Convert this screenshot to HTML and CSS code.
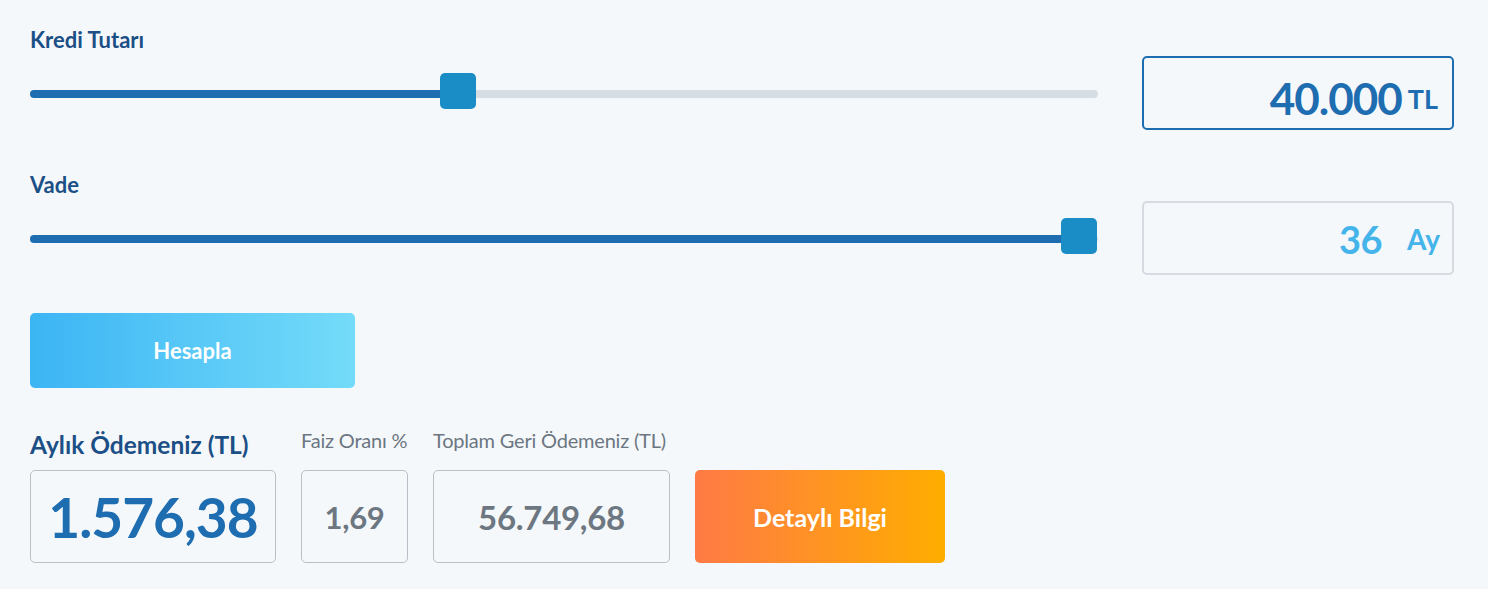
FILE: index.html
```html
<!DOCTYPE html>
<html lang="tr">
<head>
<meta charset="utf-8">
<title>Kredi Hesaplama</title>
<link rel="stylesheet" href="styles.css">
</head>
<body>
<div class="calc">
  <div class="field">
    <div class="field-main">
      <div class="field-label">Kredi Tutarı</div>
      <div class="slider">
        <div class="track"><div class="fill" style="width:430px"></div></div>
        <div class="thumb" style="left:410px"></div>
      </div>
    </div>
    <div class="value-box value-box--active">
      <span class="value-num">40.000</span><span class="value-unit">TL</span>
    </div>
  </div>

  <div class="field field--second">
    <div class="field-main">
      <div class="field-label">Vade</div>
      <div class="slider">
        <div class="track"><div class="fill" style="width:1050px"></div></div>
        <div class="thumb" style="left:1031px"></div>
      </div>
    </div>
    <div class="value-box value-box--muted">
      <span class="value-num value-num--light">36</span><span class="value-unit value-unit--light">Ay</span>
    </div>
  </div>

  <button class="btn-calc" type="button">Hesapla</button>

  <div class="results">
    <div class="result result--main">
      <div class="result-label result-label--main">Aylık Ödemeniz (TL)</div>
      <div class="result-box result-box--main"><span class="result-main-num">1.576,38</span></div>
    </div>
    <div class="result result--rate">
      <div class="result-label">Faiz Oranı %</div>
      <div class="result-box"><span class="result-num result-num--small">1,69</span></div>
    </div>
    <div class="result result--total">
      <div class="result-label">Toplam Geri Ödemeniz (TL)</div>
      <div class="result-box"><span class="result-num">56.749,68</span></div>
    </div>
    <div class="result result--action">
      <div class="result-label"></div>
      <button class="btn-detail" type="button">Detaylı Bilgi</button>
    </div>
  </div>
</div>
</body>
</html>
```

FILE: styles.css
```css
* { box-sizing: border-box; }

html, body {
  margin: 0;
  padding: 0;
  background: #f5f8fb;
}

body {
  font-family: "Lato", "Open Sans", sans-serif;
  color: #1b4f86;
}

.calc {
  padding: 28px 34px 0 30px;
}

.field {
  display: flex;
  align-items: flex-start;
  gap: 44px;
}

.field--second {
  margin-top: 43px;
}

.field-main {
  width: 1068px;
}

.field-label {
  height: 24px;
  line-height: 24px;
  font-size: 22px;
  font-weight: 700;
  color: #1b4f86;
}

.slider {
  position: relative;
  height: 36px;
  margin-top: 21px;
}

.track {
  position: absolute;
  left: 0;
  right: 0;
  top: 17px;
  height: 8px;
  border-radius: 4px;
  background: #d6dee4;
  overflow: hidden;
}

.fill {
  height: 100%;
  background: #1e6db0;
}

.thumb {
  position: absolute;
  top: 0;
  width: 36px;
  height: 36px;
  border-radius: 5px;
  background: #1a8cc6;
}

.value-box {
  margin-top: 28px;
  width: 312px;
  height: 74px;
  border-radius: 5px;
  display: flex;
  align-items: center;
  justify-content: flex-end;
  padding: 10px 14px 0 0;
}

.value-box--active {
  border: 2px solid #1e6db0;
}

.value-box--muted {
  border: 2px solid #d5dbe0;
  padding: 2px 12px 0 0;
}

.value-num {
  font-size: 44px;
  font-weight: 700;
  color: #1e6db0;
  letter-spacing: -1px;
}

.value-unit {
  font-size: 27px;
  font-weight: 700;
  color: #1e6db0;
  margin-left: 6px;
}

.value-num--light {
  font-size: 38px;
  color: #45b4ea;
  letter-spacing: -0.5px;
}

.value-unit--light {
  font-size: 28px;
  color: #45b4ea;
  margin-left: 25px;
}

.btn-calc {
  display: block;
  margin-top: 38px;
  width: 325px;
  height: 75px;
  border: 0;
  border-radius: 5px;
  background: linear-gradient(90deg, #3cb5f4 0%, #74dbf9 100%);
  color: #ffffff;
  font-family: inherit;
  font-size: 22px;
  font-weight: 700;
  padding: 0;
}

.results {
  display: flex;
  gap: 25px;
  margin-top: 40px;
}

.result {
  display: flex;
  flex-direction: column;
}

.result-label {
  height: 42px;
  font-size: 20px;
  line-height: 24px;
  color: #6b7681;
  white-space: nowrap;
  letter-spacing: -0.2px;
}

.result-label--main {
  font-size: 24.5px;
  font-weight: 700;
  color: #1b4f86;
  line-height: 34px;
  letter-spacing: 0;
}

.result-box {
  height: 93px;
  border: 1px solid #b8bfc6;
  border-radius: 5px;
  display: flex;
  align-items: center;
  justify-content: center;
}

.result--main { width: 246px; }
.result--rate { width: 107px; }
.result--total { width: 237px; }
.result--action { width: 250px; }

.result-main-num {
  font-size: 55px;
  font-weight: 700;
  color: #1e6db0;
  letter-spacing: -1px;
}

.result-num {
  font-size: 33px;
  font-weight: 700;
  color: #6c7782;
  letter-spacing: -0.3px;
}

.result-num--small {
  font-size: 31px;
}

.btn-detail {
  height: 93px;
  width: 250px;
  border: 0;
  border-radius: 5px;
  background: linear-gradient(90deg, #ff7a45 0%, #ffad00 100%);
  color: #ffffff;
  font-family: inherit;
  font-size: 25px;
  font-weight: 700;
  padding: 0;
}
```
